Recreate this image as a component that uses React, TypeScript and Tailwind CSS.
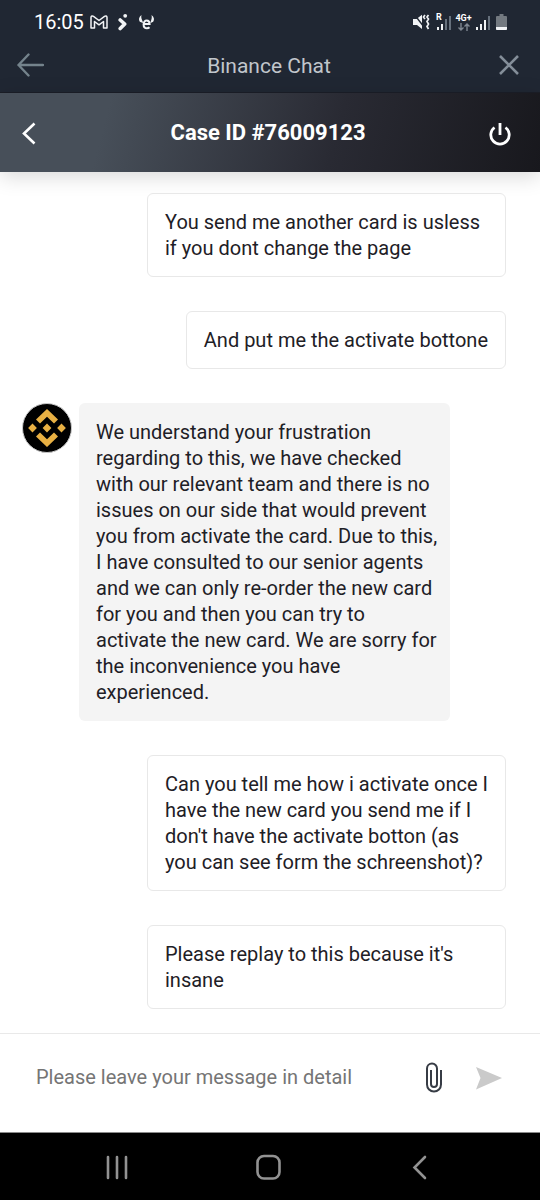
import { useState } from "react";

type Message = { id: number; from: "agent" | "user"; text: string };

const messages: Message[] = [
  { id: 1, from: "user", text: "You send me another card is usless if you dont change the page" },
  { id: 2, from: "user", text: "And put me the activate bottone" },
  {
    id: 3,
    from: "agent",
    text: "We understand your frustration regarding to this, we have checked with our relevant team and there is no issues on our side that would prevent you from activate the card. Due to this, I have consulted to our senior agents and we can only re-order the new card for you and then you can try to activate the new card. We are sorry for the inconvenience you have experienced.",
  },
  {
    id: 4,
    from: "user",
    text: "Can you tell me how i activate once I have the new card you send me if I don't have the activate botton (as you can see form the schreenshot)?",
  },
  { id: 5, from: "user", text: "Please replay to this because it's insane" },
];

function StatusBar() {
  return (
    <div className="flex h-10 items-center justify-between pl-[34px] pr-[33px] pt-1 text-white">
      <div className="flex items-center">
        <span className="w-12 whitespace-nowrap text-[20px] leading-6">16:05</span>
        <svg className="ml-2" width="18" height="14" viewBox="0 0 18 14" fill="none" stroke="#f2f4f6" strokeWidth="1.5" strokeLinejoin="round" aria-hidden="true">
          <path d="M1 13V2.400C1 .8 2.400.6 3.500 1.400L9 5.500l5.500-4.100C15.600.6 17 .8 17 2.400V13h-3.500V6.500L9 9.800 4.500 6.500V13Z" />
        </svg>
        <svg className="ml-2.5" width="10" height="18" viewBox="0 0 10 18" aria-hidden="true">
          <path d="m2.200 7 4.500 4-4.500 4.500" fill="none" stroke="#f2f4f6" strokeWidth="3.600" strokeLinejoin="round" strokeLinecap="round" />
          <circle cx="7.200" cy="2.800" r="1.900" fill="#f2f4f6" />
        </svg>
        <svg className="ml-2.5" width="18" height="16" viewBox="0 0 18 16" fill="#f2f4f6" aria-hidden="true">
          <path d="M3.500 1C1 2.700.2 5.500 1.800 7.700L5 9C5.300 7.200 2.500 5 3.500 1ZM13.500 1C16 2.700 16.800 5.500 15.200 7.700L12.600 9C12.300 7.200 14.500 5 13.500 1Z" />
          <path d="M6 10.100h5.600c0-2.300-1.100-3.500-2.900-3.500S5.600 8.200 5.600 10.400s1.200 3.800 3.300 3.800c1.100 0 2-.3 2.600-.9" fill="none" stroke="#f2f4f6" strokeWidth="2" />
        </svg>
      </div>
      <div className="flex items-center">
        <svg width="17" height="16" viewBox="0 0 17 16" aria-hidden="true">
          <path d="M0 5h3.500L9 .8V15L4 11H0Z" fill="#f2f4f6" />
          <path d="M1 0 11 13" stroke="#202733" strokeWidth="1.400" />
          <path d="m12 1-1.500 2L12 5M15.500 1 14 3l1.500 2L14 7.500l1.500 2.500-1.500 2.500 1.500 2.500" fill="none" stroke="#f2f4f6" strokeWidth="1.700" />
        </svg>
        <div className="relative ml-1.5 h-4 w-[15px]">
          <svg width="15" height="16" viewBox="0 0 15 16" aria-hidden="true">
            <path d="M1 13h2v3H1zM5 10h2v6H5z" fill="#f2f4f6" />
            <path d="M9 5h2v11H9zM13 2h2v14h-2z" fill="#66707c" />
          </svg>
          <span className="absolute -top-px left-0 text-[9px] font-bold leading-[9px]">R</span>
        </div>
        <div className="ml-[5px] flex w-[15px] flex-col items-center">
          <span className="text-[9px] font-bold leading-[9px]">4G+</span>
          <svg width="12" height="8" viewBox="0 0 12 8" fill="none" stroke="#7f8791" strokeWidth="1.400" aria-hidden="true">
            <path d="M3 0v7M.5 4.500 3 7l2.500-2.500M9 8V1M6.500 3.500 9 1l2.500 2.500" />
          </svg>
        </div>
        <svg className="ml-[5px]" width="14" height="16" viewBox="0 0 14 16" aria-hidden="true">
          <path d="M0 13h2v3H0zM4 10h2v6H4zM8 6h2v10H8z" fill="#f2f4f6" />
          <path d="M12 2h2v14h-2z" fill="#66707c" />
        </svg>
        <svg className="ml-1.5" width="11" height="16" viewBox="0 0 11 16" aria-hidden="true">
          <path d="M3.500 0h4v2H10q1 0 1 1v12q0 1-1 1H1q-1 0-1-1V3q0-1 1-1h2.500Z" fill="#737980" />
          <path d="M0 13h11v2q0 1-1 1H1q-1 0-1-1Z" fill="#f2f4f6" />
        </svg>
      </div>
    </div>
  );
}

function AgentAvatar() {
  return (
    <svg className="shrink-0" width="50" height="50" viewBox="0 0 50 50" role="img" aria-label="Binance">
      <circle cx="25" cy="25" r="24.500" fill="#000" stroke="#c9c9c9" />
      <g fill="#e8b043">
        <path d="m25 6 11 10.600-4 4-7-6.800-7 6.800-4-4Z" />
        <path d="m25 44 11-10.600-4-4-7 6.800-7-6.800-4 4Z" />
        <path d="m25 20.600 4.400 4.400-4.400 4.400-4.400-4.400ZM10.500 20.600l4.400 4.400-4.400 4.400L6.100 25ZM39.500 20.600l4.400 4.400-4.400 4.400-4.400-4.400Z" />
      </g>
    </svg>
  );
}

function Bubble({ message }: { message: Message }) {
  if (message.from === "agent") {
    return (
      <div className="flex items-start gap-[7px] pl-[22px] pr-[90px]">
        <AgentAvatar />
        <p className="flex-1 rounded-md bg-[#f4f4f4] py-4 pl-[17px] pr-3">{message.text}</p>
      </div>
    );
  }
  return (
    <div className="flex justify-end pl-[147px] pr-[34px]">
      <p className="rounded-md border border-[#e8e8e8] py-[15px] px-[17px]">{message.text}</p>
    </div>
  );
}

export default function App() {
  const [draft, setDraft] = useState("");

  return (
    <div className="flex min-h-screen flex-col bg-white font-['Roboto',sans-serif] text-[20px] leading-[26px] text-[#1e2026]">
      <header>
        <div className="bg-[#202733]">
          <StatusBar />
          <div className="flex h-[53px] items-center justify-between border-b border-[#1b1e27] px-4">
            <button type="button" aria-label="Go back">
              <svg width="28" height="26" viewBox="0 0 28 26" fill="none" stroke="#74838c" strokeWidth="2.400" strokeLinecap="round" strokeLinejoin="round">
                <path d="M27 12H2.500M12.500 1.500 2.500 12l10 10.500" />
              </svg>
            </button>
            <h1 className="text-[21px] text-[#c1c6cc]">Binance Chat</h1>
            <button type="button" aria-label="Close">
              <svg width="30" height="24" viewBox="0 0 30 24" fill="none" stroke="#848e99" strokeWidth="2.600">
                <path d="m6 2 18 18M24 2 6 20" />
              </svg>
            </button>
          </div>
        </div>
        <div className="flex h-[79px] items-center justify-between bg-linear-[105deg,#474f59_20%,#292a33_62%,#18181d] pl-[22px] pr-[26px] text-white shadow-[0_4px_20px_rgba(0,0,0,0.16)]">
          <button type="button" aria-label="Previous screen">
            <svg width="28" height="28" viewBox="0 0 28 28" fill="none" stroke="currentColor" strokeWidth="2.600">
              <path d="M12.500 4.500 2 14.500l10.500 10" />
            </svg>
          </button>
          <h2 className="text-[22px] font-bold">Case ID #76009123</h2>
          <button type="button" aria-label="End chat">
            <svg width="28" height="28" viewBox="0 0 28 28" fill="none" stroke="currentColor" strokeWidth="2.800">
              <path d="M14 4v12M8.500 8.500a9.200 9.200 0 1 0 11 0" />
            </svg>
          </button>
        </div>
      </header>

      <main className="flex flex-1 flex-col gap-[34px] pb-6 pt-[21px]">
        {messages.map((message) => (
          <Bubble key={message.id} message={message} />
        ))}
      </main>

      <form
        className="flex h-[99px] items-center border-t border-[#e9e9e9] pb-3 pl-9 pr-9"
        onSubmit={(event) => event.preventDefault()}
      >
        <input
          type="text"
          aria-label="Message"
          value={draft}
          onChange={(event) => setDraft(event.target.value)}
          placeholder="Please leave your message in detail"
          className="min-w-0 flex-1 outline-none placeholder:text-[#757575]"
        />
        <button type="button" aria-label="Attach file" className="mr-8">
          <svg width="20" height="34" viewBox="0 0 20 34" fill="none" stroke="#373c45" strokeWidth="2">
            <path d="M17 10v14.500a7 7 0 0 1-14 0V8.500a5 5 0 0 1 10 0v15.500a3 3 0 0 1-6 0V10" />
          </svg>
        </button>
        <button type="submit" aria-label="Send">
          <svg width="28" height="26" viewBox="0 0 28 26" fill="#cacaca">
            <path d="M0 3 26 14 0 25.500l4.500-11.500Z" />
          </svg>
        </button>
      </form>

      <nav className="flex h-[68px] items-center justify-between border-t border-[#8a8a8a] bg-black pl-[103px] pr-[105px]" aria-label="System">
        <button type="button" aria-label="Recent apps">
          <svg width="28" height="28" viewBox="0 0 28 28" fill="none" stroke="#929292" strokeWidth="2.600" strokeLinecap="round">
            <path d="M5 4v21M14 4v21M23 4v21" />
          </svg>
        </button>
        <button type="button" aria-label="Home">
          <svg width="28" height="28" viewBox="0 0 28 28" fill="none" stroke="#929292" strokeWidth="2.600">
            <rect x="2.500" y="3" width="22" height="22.500" rx="6.500" />
          </svg>
        </button>
        <button type="button" aria-label="Back">
          <svg width="28" height="28" viewBox="0 0 28 28" fill="none" stroke="#929292" strokeWidth="2.600" strokeLinecap="round">
            <path d="M18 4 7.500 14.500 18 25" />
          </svg>
        </button>
      </nav>
    </div>
  );
}
